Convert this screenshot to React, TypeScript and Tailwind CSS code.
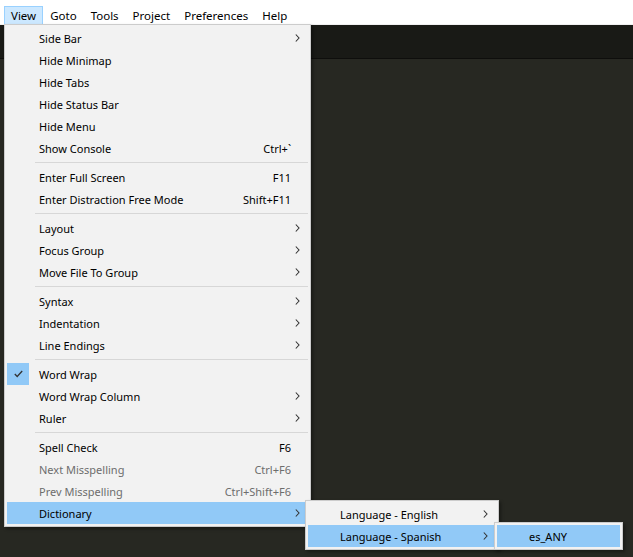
import React from 'react';

type MenuItem = {
  label?: string;
  shortcut?: string;
  sub?: boolean;
  disabled?: boolean;
  checked?: boolean;
  active?: boolean;
  sep?: boolean;
};

const viewItems: MenuItem[] = [
  { label: 'Side Bar', sub: true },
  { label: 'Hide Minimap' },
  { label: 'Hide Tabs' },
  { label: 'Hide Status Bar' },
  { label: 'Hide Menu' },
  { label: 'Show Console', shortcut: 'Ctrl+`' },
  { sep: true },
  { label: 'Enter Full Screen', shortcut: 'F11' },
  { label: 'Enter Distraction Free Mode', shortcut: 'Shift+F11' },
  { sep: true },
  { label: 'Layout', sub: true },
  { label: 'Focus Group', sub: true },
  { label: 'Move File To Group', sub: true },
  { sep: true },
  { label: 'Syntax', sub: true },
  { label: 'Indentation', sub: true },
  { label: 'Line Endings', sub: true },
  { sep: true },
  { label: 'Word Wrap', checked: true },
  { label: 'Word Wrap Column', sub: true },
  { label: 'Ruler', sub: true },
  { sep: true },
  { label: 'Spell Check', shortcut: 'F6' },
  { label: 'Next Misspelling', shortcut: 'Ctrl+F6', disabled: true },
  { label: 'Prev Misspelling', shortcut: 'Ctrl+Shift+F6', disabled: true },
  { label: 'Dictionary', sub: true, active: true },
];

const dictItems: MenuItem[] = [
  { label: 'Language - English', sub: true },
  { label: 'Language - Spanish', sub: true, active: true },
];

const spanishItems: MenuItem[] = [{ label: 'es_ANY', active: true }];

const menuBar = ['View', 'Goto', 'Tools', 'Project', 'Preferences', 'Help'];

function Chevron() {
  return (
    <svg width="5" height="8" viewBox="0 0 5 8" className="block">
      <polyline points="0.8,0.5 4,4 0.8,7.5" fill="none" stroke="#333" strokeWidth="1.1" />
    </svg>
  );
}

function Check() {
  return (
    <svg width="9" height="8" viewBox="0 0 9 8" className="block">
      <polyline points="0.8,4 3.2,6.5 8.2,1" fill="none" stroke="#333" strokeWidth="1.3" />
    </svg>
  );
}

function Menu({ items, className }: { items: MenuItem[]; className: string }) {
  return (
    <div
      className={`absolute border border-[#cccccc] bg-[#f2f2f2] p-[2px] shadow-[2px_2px_3px_rgba(0,0,0,0.35)] ${className}`}
    >
      {items.map((it, i) =>
        it.sep ? (
          <div key={i} className="flex h-[7px] items-center">
            <div className="ml-[28px] h-px flex-1 bg-[#d7d7d7]" />
          </div>
        ) : (
          <div
            key={i}
            className={`flex h-[22px] items-center ${it.active ? 'bg-[#91c9f7]' : ''} ${
              it.disabled ? 'text-[#6d6d6d]' : 'text-black'
            }`}
          >
            <span
              className={`flex h-[22px] w-[22px] shrink-0 items-center justify-center ${
                it.checked ? 'bg-[#91c9f7]' : ''
              }`}
            >
              {it.checked && <Check />}
            </span>
            <span className="flex-1 whitespace-nowrap pl-[10px] pt-[1px]">{it.label}</span>
            {it.shortcut && <span className="whitespace-nowrap pt-[1px]">{it.shortcut}</span>}
            <span className="flex w-[17px] shrink-0 pl-[4px]">{it.sub && <Chevron />}</span>
          </div>
        )
      )}
    </div>
  );
}

export default function App() {
  return (
    <div className="relative flex h-[557px] w-[633px] flex-col overflow-hidden bg-[#272822] font-['Segoe_UI','Noto_Sans',sans-serif] text-[11px] leading-none">
      <div className="flex h-[25px] shrink-0 items-start border-b border-[#f0f0f0] bg-white pl-[4px] pt-[6px]">
        {menuBar.map((m) => (
          <div
            key={m}
            className={`flex h-[19px] items-center px-[6px] pt-[1px] text-[11.5px] text-black ${
              m === 'View' ? 'border border-[#99d1ff] bg-[#cce8ff]' : 'border border-transparent'
            }`}
          >
            {m}
          </div>
        ))}
      </div>
      <div className="h-[34px] shrink-0 border-b border-[#0e0e0c] bg-[#191a16]" />
      <div className="flex-1 bg-[#272822]" />

      <Menu items={viewItems} className="left-[4px] top-[24px] w-[307px]" />
      <Menu items={dictItems} className="left-[305px] top-[500px] w-[194px]" />
      <Menu items={spanishItems} className="left-[494px] top-[522px] w-[129px]" />
    </div>
  );
}
